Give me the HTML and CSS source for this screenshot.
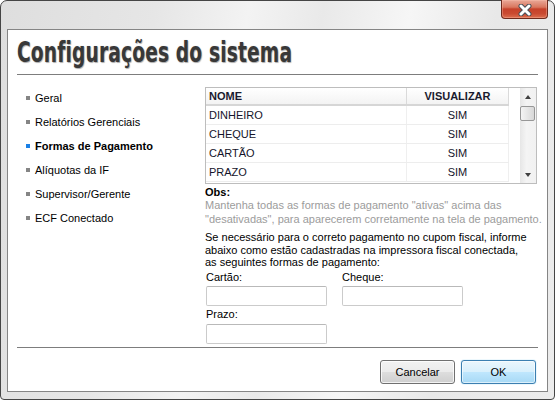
FILE: index.html
```html
<!DOCTYPE html>
<html lang="pt-BR">
<head>
<meta charset="utf-8">
<title>Configurações do sistema</title>
<link rel="stylesheet" href="styles.css">
</head>
<body>
<div class="window">
  <div class="titlebar">
    <div class="close">
      <svg width="14" height="12" viewBox="0 0 14 12">
        <path d="M3 2 L11 10 M11 2 L3 10" stroke="#4a4f57" stroke-width="5" stroke-linecap="round" fill="none"/>
        <path d="M3 2 L11 10 M11 2 L3 10" stroke="#ffffff" stroke-width="3" stroke-linecap="round" fill="none"/>
      </svg>
    </div>
  </div>
  <div class="client">
    <div class="header">
      <h1 class="title"><span class="title-text">Configurações do sistema</span></h1>
    </div>
    <div class="body">
      <ul class="nav">
        <li class="nav-item">Geral</li>
        <li class="nav-item">Relatórios Gerenciais</li>
        <li class="nav-item active">Formas de Pagamento</li>
        <li class="nav-item">Alíquotas da IF</li>
        <li class="nav-item">Supervisor/Gerente</li>
        <li class="nav-item">ECF Conectado</li>
      </ul>
      <div class="panel">
        <div class="grid-box">
          <div class="grid">
            <div class="grid-head">
              <div class="col1">NOME</div>
              <div class="col2">VISUALIZAR</div>
            </div>
            <div class="grid-row"><div class="col1">DINHEIRO</div><div class="col2">SIM</div></div>
            <div class="grid-row"><div class="col1">CHEQUE</div><div class="col2">SIM</div></div>
            <div class="grid-row"><div class="col1">CARTÃO</div><div class="col2">SIM</div></div>
            <div class="grid-row"><div class="col1">PRAZO</div><div class="col2">SIM</div></div>
          </div>
          <div class="scrollbar">
            <div class="sb-btn"><span class="tri-up"></span></div>
            <div class="sb-thumb"></div>
            <div class="sb-fill"></div>
            <div class="sb-btn"><span class="tri-down"></span></div>
          </div>
        </div>
        <div class="obs-label">Obs:</div>
        <p class="obs">Mantenha todas as formas de pagamento "ativas" acima das<br>"desativadas", para aparecerem corretamente na tela de pagamento.</p>
        <p class="info">Se necessário para o correto pagamento no cupom fiscal, informe<br>abaixo como estão cadastradas na impressora fiscal conectada,<br>as seguintes formas de pagamento:</p>
        <div class="fields">
          <div class="field">
            <div class="field-label">Cartão:</div>
            <div class="input"></div>
          </div>
          <div class="field">
            <div class="field-label">Cheque:</div>
            <div class="input"></div>
          </div>
          <div class="field">
            <div class="field-label">Prazo:</div>
            <div class="input"></div>
          </div>
        </div>
      </div>
    </div>
    <div class="sep"></div>
    <div class="footer">
      <div class="btn">Cancelar</div>
      <div class="btn btn-primary">OK</div>
    </div>
  </div>
</div>
</body>
</html>
```
FILE: styles.css
```css
html, body {
  margin: 0;
  padding: 0;
  background: #ffffff;
}
body {
  font-family: "Liberation Sans", Arial, sans-serif;
  font-size: 11px;
  color: #000;
}
.window {
  width: 555px;
  height: 400px;
  box-sizing: border-box;
  border: 1px solid #454545;
  border-radius: 7px 7px 4px 4px;
  padding: 0 6px 7px 6px;
  display: flex;
  flex-direction: column;
  background:
    linear-gradient(100deg, #dedede 0%, #e6e6e6 25%, #f3f3f3 40%, #e9e9e9 52%, #f6f6f6 66%, #e8e8e8 80%, #ececec 100%);
}
.titlebar {
  height: 29px;
  margin-top: -1px;
  display: flex;
  justify-content: flex-end;
  flex: none;
}
.close {
  width: 47px;
  height: 19px;
  box-sizing: border-box;
  border: 1px solid #6e2a1d;
  border-top: none;
  border-radius: 0 0 4px 4px;
  background: linear-gradient(#e9a898 0%, #d9775f 40%, #c6412a 50%, #c94a31 75%, #dc6d4f 100%);
  box-shadow: inset 0 0 0 1px rgba(255, 200, 180, 0.35);
  display: flex;
  align-items: center;
  justify-content: center;
}
.close svg {
  display: block;
  margin-top: 1px;
}
.client {
  flex: 1;
  border: 1px solid #858585;
  background: #ffffff;
  display: flex;
  flex-direction: column;
}
.header {
  margin: 0 9px;
  padding-top: 5px;
  height: 39px;
  border-bottom: 1px solid #7d7d7d;
}
.title {
  margin: 0;
  font-family: "DejaVu Sans Condensed", "Liberation Sans", sans-serif;
  font-weight: bold;
  font-size: 29px;
  line-height: 34px;
  color: #383838;
  white-space: nowrap;
}
.title-text {
  display: inline-block;
  transform: scaleX(0.715);
  transform-origin: left center;
  letter-spacing: 0.2px;
  text-shadow: 1px 1px 1px rgba(0, 0, 0, 0.3), 0 0 2px rgba(0, 0, 0, 0.12);
}
.body {
  height: 272px;
  display: flex;
  margin: 0 9px;
}
.nav {
  list-style: none;
  margin: 0;
  padding: 11px 0 0 9px;
  width: 179px;
}
.nav-item {
  height: 24px;
  line-height: 24px;
  display: flex;
  align-items: center;
  white-space: nowrap;
  color: #000;
}
.nav-item::before {
  content: "";
  width: 4px;
  height: 4px;
  background: #858585;
  margin-right: 5px;
  flex: none;
}
.nav-item.active {
  font-weight: bold;
}
.nav-item.active::before {
  background: #1a80e6;
}
.panel {
  width: 332px;
  padding-top: 12px;
}
.grid-box {
  height: 97px;
  box-sizing: border-box;
  border: 1px solid #bdbdbd;
  display: flex;
}
.grid {
  width: 303px;
  flex: none;
}
.grid-head {
  height: 16px;
  display: flex;
  border-bottom: 2px solid #d6d6d6;
  background: linear-gradient(#ffffff, #f3f3f3);
  font-weight: bold;
  color: #1a1a2e;
}
.grid-head .col1,
.grid-head .col2 {
  border-right: 1px solid #dadada;
  line-height: 16px;
}
.col1 {
  width: 197px;
  padding-left: 3px;
  white-space: nowrap;
}
.col2 {
  width: 101px;
  text-align: center;
  white-space: nowrap;
}
.grid-row {
  height: 18px;
  display: flex;
  border-bottom: 1px solid #ededed;
  color: #14142a;
}
.grid-row .col1,
.grid-row .col2 {
  border-right: 1px solid #efefef;
  line-height: 18px;
}
.scrollbar {
  width: 16px;
  margin-left: 11px;
  display: flex;
  flex-direction: column;
  background: linear-gradient(90deg, #e6e6e6, #f4f4f4 40%, #f1f1f1);
}
.sb-btn {
  height: 17px;
  display: flex;
  align-items: center;
  justify-content: center;
  flex: none;
}
.tri-up {
  width: 0;
  height: 0;
  border-left: 3.5px solid transparent;
  border-right: 3.5px solid transparent;
  border-bottom: 4px solid #404040;
}
.tri-down {
  width: 0;
  height: 0;
  border-left: 3.5px solid transparent;
  border-right: 3.5px solid transparent;
  border-top: 4px solid #404040;
}
.sb-thumb {
  height: 15px;
  width: 15px;
  margin-top: 1px;
  box-sizing: border-box;
  border: 1px solid #979797;
  border-radius: 2px;
  background: linear-gradient(90deg, #f4f4f4, #e6e6e6 50%, #d8d8d8);
  flex: none;
}
.sb-fill {
  flex: 1;
}
.obs-label {
  margin-top: 3px;
  line-height: 11px;
  font-weight: bold;
}
.obs {
  margin: 0;
  line-height: 14px;
  color: #9c9c9c;
  white-space: nowrap;
}
.info {
  margin: 5px 0 0 0;
  line-height: 12.5px;
  white-space: nowrap;
}
.fields {
  display: grid;
  grid-template-columns: 121px 121px;
  column-gap: 15px;
  row-gap: 2px;
  margin-left: 1px;
  margin-top: 2px;
}
.field-label {
  line-height: 13px;
  margin-bottom: 2.5px;
}
.input {
  height: 20px;
  box-sizing: border-box;
  border: 1px solid #cbcbcb;
  border-top-color: #b9b9b9;
  border-radius: 2px;
  background: #fff;
}
.sep {
  margin: 0 9px;
  border-top: 1px solid #7d7d7d;
}
.footer {
  flex: 1;
  display: flex;
  justify-content: flex-end;
  align-items: flex-start;
  gap: 6px;
  padding: 12px 11px 0 0;
}
.btn {
  width: 75px;
  height: 24px;
  box-sizing: border-box;
  border: 1px solid #707070;
  border-radius: 3px;
  background: linear-gradient(#f2f2f2 0%, #ebebeb 48%, #dddddd 52%, #cfcfcf 100%);
  box-shadow: inset 0 0 0 1px rgba(255, 255, 255, 0.75);
  display: flex;
  align-items: center;
  justify-content: center;
  font-size: 11px;
  color: #000;
}
.btn-primary {
  border-color: #3c7fb1;
  background: linear-gradient(#eaf6fd 0%, #d9f0fc 48%, #bee6fd 52%, #a7d9f5 100%);
  box-shadow: inset 0 0 0 1px rgba(255, 255, 255, 0.6), 0 0 1px #48b3e8;
}
```
